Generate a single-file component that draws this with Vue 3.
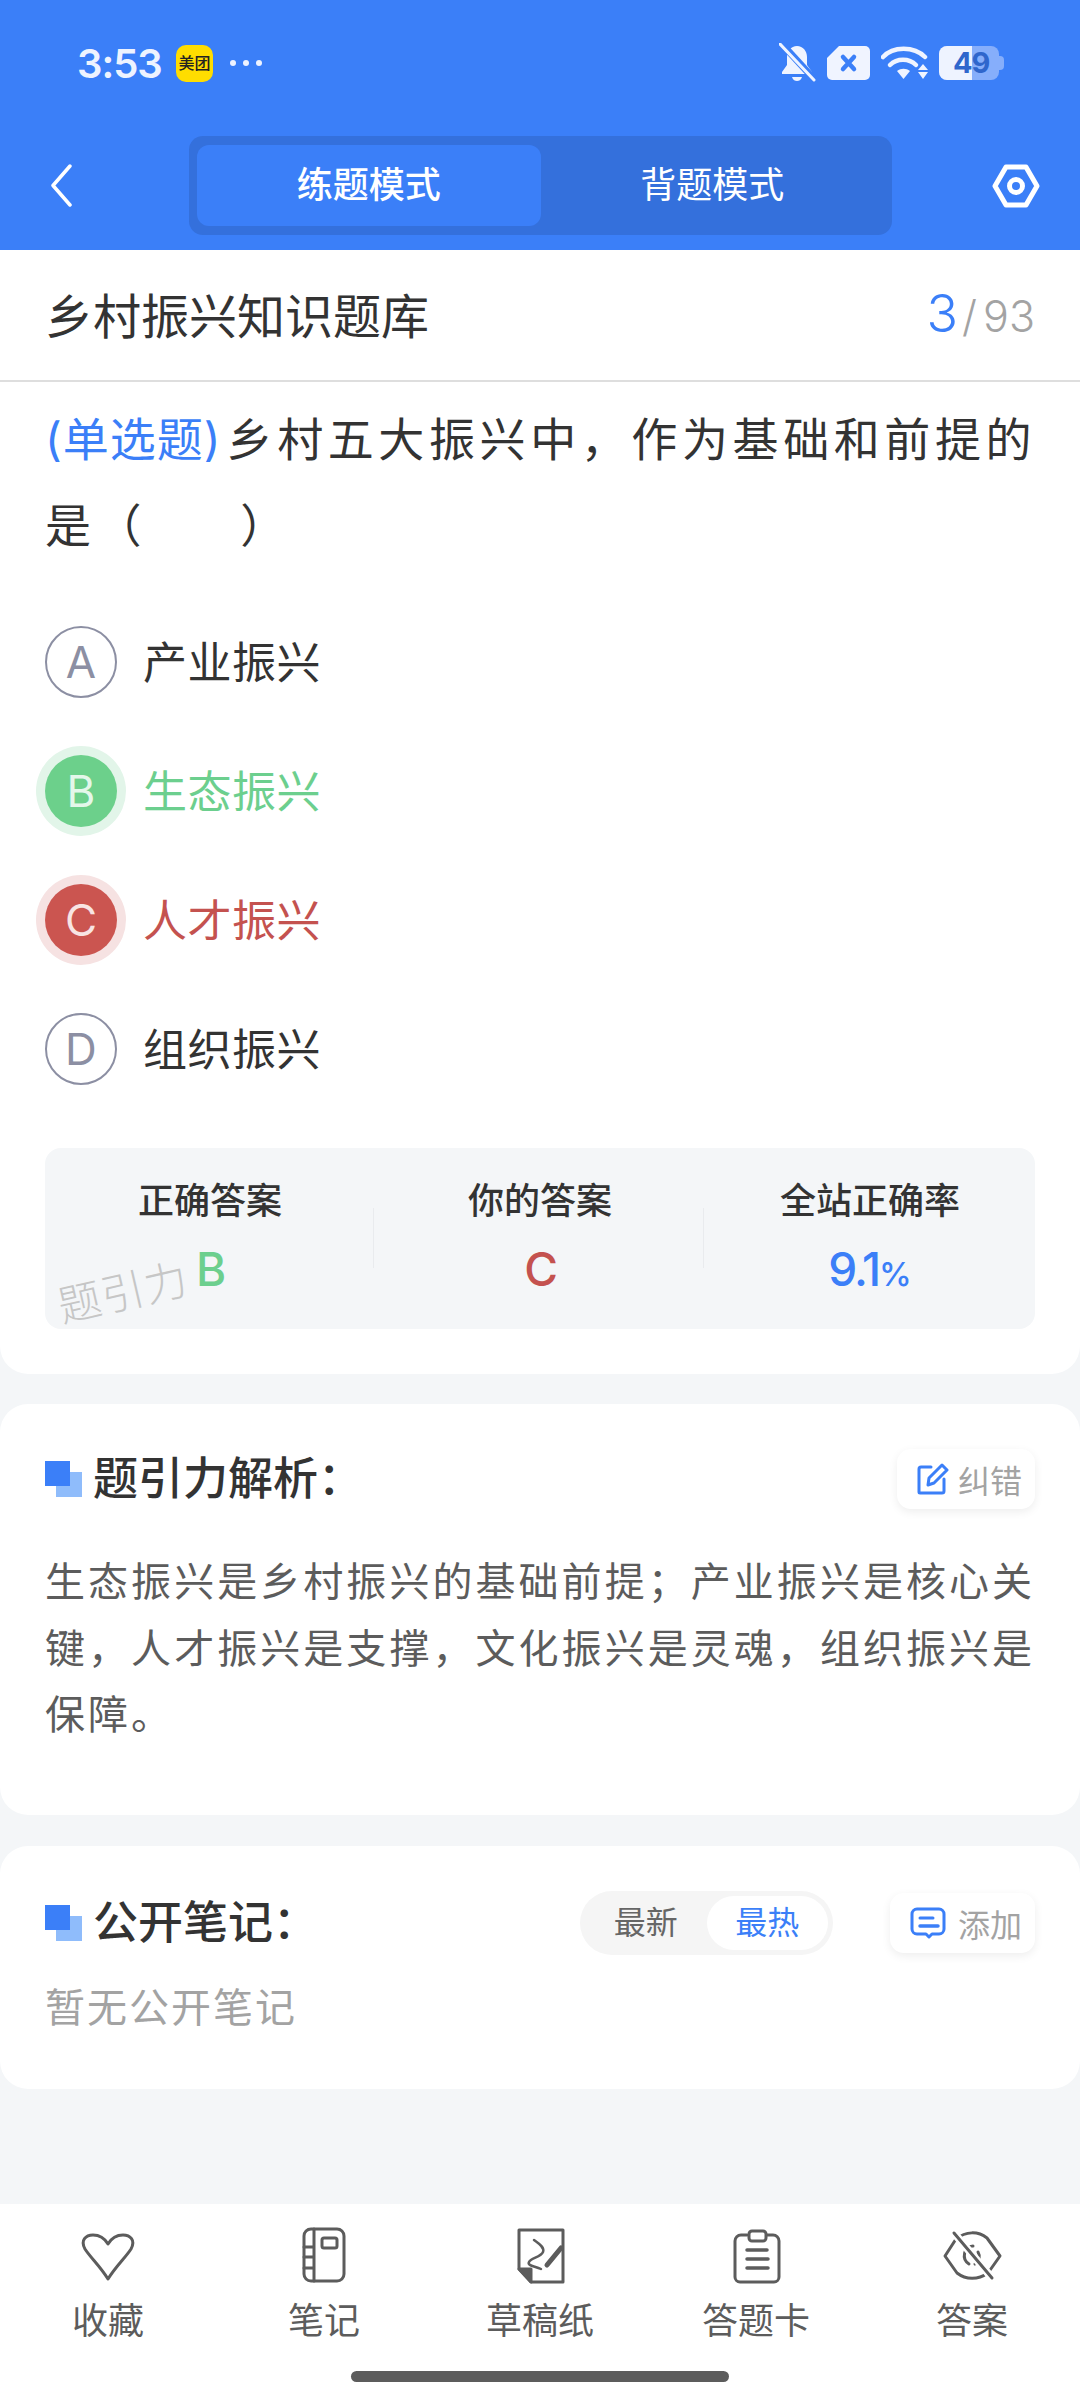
<template>
  <div class="page">
    <header class="top">
      <div class="status">
        <div class="status-left">
          <span class="time">3:53</span>
          <span class="mt">美团</span>
          <span class="dots"><i></i><i></i><i></i></span>
        </div>
        <div class="status-right">
          <svg class="bell" width="37" height="40" viewBox="0 0 37 40">
            <path d="M18 3c-6 0-10 5-10 11v8l-5 7v2h30v-2l-5-7v-8c0-6-4-11-10-11z" fill="#f0f4ff" />
            <path d="M13 34h10c-1 3-3 4-5 4s-4-1-5-4z" fill="#f0f4ff" />
            <path d="M2 0l33 36" stroke="#3b7ff8" stroke-width="7" />
            <path d="M1 1l34 36" stroke="#f0f4ff" stroke-width="3" stroke-linecap="round" />
          </svg>
          <svg class="sim" width="43" height="34" viewBox="0 0 43 34">
            <path d="M12 0h26a5 5 0 0 1 5 5v24a5 5 0 0 1-5 5H5a5 5 0 0 1-5-5V12z" fill="#f0f4ff" />
            <path d="M16 11l11 12M27 11L16 23" stroke="#3b7ff8" stroke-width="4.5" stroke-linecap="round" />
          </svg>
          <svg class="wifi" width="47" height="34" viewBox="0 0 47 34">
            <path d="M2 11C12 0 33 0 44 11" fill="none" stroke="#f0f4ff" stroke-width="4.5" stroke-linecap="round" />
            <path d="M9 19c7-7 19-7 26 0" fill="none" stroke="#f0f4ff" stroke-width="4.5" stroke-linecap="round" />
            <path d="M16 25c4-3 9-3 13 0l-6.500 8z" fill="#f0f4ff" />
            <path d="M42 18l5 6H37zM37 26h10l-5 7z" fill="#f0f4ff" />
          </svg>
          <div class="battery">
            <span class="battery-fill"></span>
            <span class="battery-tip"></span>
            <span class="battery-num">49</span>
          </div>
        </div>
      </div>

      <div class="toolbar">
        <svg class="back" width="22" height="43" viewBox="0 0 22 43">
          <path d="M20 2L3 21.500 20 41" fill="none" stroke="#fff" stroke-width="3.500" stroke-linecap="round" stroke-linejoin="round" />
        </svg>
        <div class="mode-tabs">
          <div class="mode-tab on">练题模式</div>
          <div class="mode-tab">背题模式</div>
        </div>
        <svg class="gear" width="48" height="44" viewBox="0 0 48 44">
          <path d="M14 3h20l11 19-11 19H14L3 22z" fill="none" stroke="#fff" stroke-width="5" stroke-linejoin="round" />
          <circle cx="24" cy="22" r="6.500" fill="none" stroke="#fff" stroke-width="5" />
        </svg>
      </div>
    </header>

    <section class="card question-card">
      <div class="title-row">
        <span class="title">乡村振兴知识题库</span>
        <span class="count"><b>3</b><em>/</em>93</span>
      </div>

      <div class="question">
        <span class="qtype">(单选题)</span>乡村五大振兴中&#65292;作为基础和前提的是&#65288;<span class="blank"></span>&#65289;
      </div>

      <div class="options">
        <div v-for="opt in options" :key="opt.key" class="option" :class="opt.state">
          <span class="letter">{{ opt.key }}</span>
          <span class="opt-text">{{ opt.text }}</span>
        </div>
      </div>

      <div class="stats">
        <div v-for="item in stats" :key="item.label" class="stat">
          <div class="stat-label">{{ item.label }}</div>
          <div class="stat-value" :class="item.cls">{{ item.value }}<small v-if="item.unit">{{ item.unit }}</small></div>
        </div>
        <span class="watermark">题引力</span>
      </div>
    </section>

    <section class="card analysis">
      <div class="head-row">
        <h2 class="heading"><span class="mark"></span>题引力解析&#65306;</h2>
        <div class="mini-btn fix">
          <svg width="33" height="32" viewBox="0 0 33 32">
            <path d="M15 4H5a2 2 0 0 0-2 2v23a1 1 0 0 0 1 1h22a2 2 0 0 0 2-2V16" fill="none" stroke="#3b7ff8" stroke-width="3" stroke-linecap="round" />
            <path d="M12 22l1-7L26 2l5 5-13 13z" fill="none" stroke="#3b7ff8" stroke-width="3" stroke-linejoin="round" />
          </svg>
          <span>纠错</span>
        </div>
      </div>
      <p class="analysis-text">生态振兴是乡村振兴的基础前提&#65307;产业振兴是核心关键&#65292;人才振兴是支撑&#65292;文化振兴是灵魂&#65292;组织振兴是保障&#12290;</p>
    </section>

    <section class="card notes">
      <div class="head-row">
        <h2 class="heading"><span class="mark"></span>公开笔记&#65306;</h2>
        <div class="note-tools">
          <div class="sort">
            <span class="sort-item">最新</span>
            <span class="sort-item on">最热</span>
          </div>
          <div class="mini-btn add">
            <svg width="36" height="32" viewBox="0 0 36 32">
              <path d="M7 2h22a5 5 0 0 1 5 5v15a5 5 0 0 1-5 5h-7l-3 3-3-3H7a5 5 0 0 1-5-5V7a5 5 0 0 1 5-5z" fill="none" stroke="#3b7ff8" stroke-width="3" stroke-linejoin="round" />
              <path d="M10 11h13" stroke="#3b7ff8" stroke-width="3" stroke-linecap="round" />
              <path d="M10 19h18" stroke="#3b7ff8" stroke-width="3.500" stroke-linecap="round" />
            </svg>
            <span>添加</span>
          </div>
        </div>
      </div>
      <p class="empty">暂无公开笔记</p>
    </section>

    <nav class="bottom">
      <div class="nav-item">
        <svg width="60" height="60" viewBox="0 0 60 60">
          <path d="M30 55C22 42 12 33 7 25 2 16 8 11 15 11c7 0 12 4 15 9 3-5 8-9 15-9 7 0 13 5 8 14-5 8-15 17-23 30z" />
        </svg>
        <span>收藏</span>
      </div>
      <div class="nav-item">
        <svg width="60" height="60" viewBox="0 0 60 60">
          <rect x="10" y="5" width="40" height="52" rx="7" />
          <path d="M20 5v52M10 23h10M10 33h10M10 44h10" />
          <rect x="28" y="14" width="15" height="10" rx="2" />
        </svg>
        <span>笔记</span>
      </div>
      <div class="nav-item">
        <svg width="60" height="60" viewBox="0 0 60 60">
          <path d="M9 6h44v52H21L9 45z" />
          <path d="M9 45h12v13z" class="solid" />
          <path d="M24 16c4 3 11 7 9 12s-12 6-14 10 6 4 12 7" stroke-width="2.500" />
          <path d="M51 24L37 41" stroke-width="5" />
        </svg>
        <span>草稿纸</span>
      </div>
      <div class="nav-item">
        <svg width="60" height="60" viewBox="0 0 60 60">
          <path d="M21 11h-6a6 6 0 0 0-6 6v36a5 5 0 0 0 5 5h34a5 5 0 0 0 5-5V17a6 6 0 0 0-6-6h-6" />
          <rect x="23" y="7" width="17" height="10" rx="3" />
          <path d="M21 26h20M21 35h21M21 44h21" stroke-width="3.500" />
        </svg>
        <span>答题卡</span>
      </div>
      <div class="nav-item">
        <svg width="60" height="60" viewBox="0 0 60 60">
          <path d="M3 32l11-17c10-8 22-8 31-1l13 18-12 17c-10 7-22 7-31 0z" />
          <path d="M31 22c-9 0-12 13-4 18M36 28c3 5 1 10-3 12" />
          <path d="M12 9l38 45" stroke="#fff" stroke-width="8" />
          <path d="M12 9l38 45" />
        </svg>
        <span>答案</span>
      </div>
      <div class="home-bar"></div>
    </nav>
  </div>
</template>

<script setup>
const options = [
  { key: 'A', text: '产业振兴', state: '' },
  { key: 'B', text: '生态振兴', state: 'right' },
  { key: 'C', text: '人才振兴', state: 'wrong' },
  { key: 'D', text: '组织振兴', state: '' }
]

const stats = [
  { label: '正确答案', value: 'B', cls: 'green' },
  { label: '你的答案', value: 'C', cls: 'red' },
  { label: '全站正确率', value: '9.1', unit: '%', cls: 'blue' }
]
</script>

<style>
body {
  margin: 0;
  background: #f4f6f8;
}
</style>

<style scoped>
.page {
  width: 1080px;
  height: 2400px;
  display: flex;
  flex-direction: column;
  overflow: hidden;
  background: #f4f6f8;
  font-family: 'Inter', 'Noto Sans CJK SC', sans-serif;
  color: #333;
}

.top {
  height: 250px;
  box-sizing: border-box;
  padding-top: 42px;
  background: #3b7ff8;
}

.status {
  height: 42px;
  display: flex;
  align-items: center;
  justify-content: space-between;
  padding: 0 76px 0 77px;
}

.status-left,
.status-right {
  display: flex;
  align-items: center;
}

.time {
  font-size: 40px;
  font-weight: 600;
  letter-spacing: -1px;
  color: #eef3ff;
  width: 99px;
}

.mt {
  width: 37px;
  height: 37px;
  border-radius: 10px;
  background: #ffdd00;
  color: #222;
  font-size: 16px;
  font-weight: 500;
  line-height: 37px;
  text-align: center;
  white-space: nowrap;
}

.dots {
  display: flex;
  gap: 7px;
  margin-left: 17px;
}

.dots i {
  width: 6px;
  height: 6px;
  border-radius: 50%;
  background: #eef3ff;
}

.status-right {
  gap: 11px;
}

.battery {
  position: relative;
  width: 60px;
  height: 34px;
  margin-right: 5px;
  border-radius: 8px;
  background: #86aefb;
  overflow: visible;
}

.battery-fill {
  position: absolute;
  left: 0;
  top: 0;
  bottom: 0;
  width: 33px;
  border-radius: 8px 0 0 8px;
  background: #eef3ff;
}

.battery-tip {
  position: absolute;
  right: -5px;
  top: 10px;
  width: 5px;
  height: 14px;
  border-radius: 0 4px 4px 0;
  background: #86aefb;
}

.battery-num {
  position: absolute;
  left: 14px;
  top: 0;
  line-height: 34px;
  font-size: 29px;
  font-weight: 700;
  color: #2f66cc;
  letter-spacing: -1px;
}

.toolbar {
  height: 99px;
  margin-top: 52px;
  display: flex;
  align-items: center;
  padding: 0 40px 0 50px;
}

.back {
  flex: none;
}

.mode-tabs {
  width: 703px;
  height: 99px;
  margin-left: 117px;
  box-sizing: border-box;
  padding: 9px 8px;
  display: flex;
  border-radius: 14px;
  background: #3470dc;
}

.mode-tab {
  flex: 1;
  border-radius: 12px;
  font-size: 36px;
  line-height: 81px;
  text-align: center;
  color: #fff;
}

.mode-tab.on {
  background: #3b7ff8;
  font-weight: 500;
}

.gear {
  margin-left: auto;
}

.card {
  background: #fff;
  border-radius: 28px;
}

.question-card {
  border-radius: 0 0 28px 28px;
  padding-bottom: 45px;
}

.title-row {
  height: 130px;
  display: flex;
  align-items: center;
  justify-content: space-between;
  padding: 0 45px;
  border-bottom: 2px solid #dedede;
}

.title {
  font-size: 48px;
  font-weight: 400;
  color: #333;
  padding-bottom: 5px;
}

.count {
  font-size: 43px;
  font-weight: 300;
  color: #a3a3a3;
  padding-bottom: 4px;
}

.count b {
  font-size: 52px;
  font-weight: 300;
  color: #3b7ff8;
}

.count em {
  font-style: normal;
  margin: 0 6px 0 4px;
}

.question {
  margin: 14px 37px 0 45px;
  font-size: 46px;
  line-height: 86px;
  letter-spacing: 4.600px;
  color: #333;
}

.qtype {
  color: #3b7ff8;
  letter-spacing: 1px;
  margin-right: 5px;
}

.blank {
  display: inline-block;
  width: 94px;
}

.options {
  margin: 29px 45px 0;
}

.option {
  height: 129px;
  display: flex;
  align-items: center;
}

.letter {
  width: 72px;
  height: 72px;
  flex: none;
  box-sizing: border-box;
  border: 2px solid #8c8fa3;
  border-radius: 50%;
  display: flex;
  align-items: center;
  justify-content: center;
  font-size: 44px;
  font-weight: 400;
  color: #8c8fa3;
}

.opt-text {
  margin-left: 26px;
  padding-bottom: 3px;
  font-size: 44px;
  letter-spacing: 0.500px;
  color: #333;
}

.option.right .letter {
  border: 0;
  background: #6cd08b;
  color: #e4f7ea;
  box-shadow: 0 0 0 9px #e2f5e9;
}

.option.right .opt-text {
  color: #6ccf8e;
}

.option.wrong .letter {
  border: 0;
  background: #cb5550;
  color: #f8e4e3;
  box-shadow: 0 0 0 9px #f6e2e2;
}

.option.wrong .opt-text {
  color: #c4524f;
}

.stats {
  position: relative;
  height: 181px;
  margin: 35px 45px 0;
  display: flex;
  border-radius: 16px;
  background: #f4f6f8;
}

.stat {
  flex: 1;
  position: relative;
  text-align: center;
}

.stat + .stat::before {
  content: '';
  position: absolute;
  left: -2px;
  top: 60px;
  height: 60px;
  width: 1px;
  background: #e9ebee;
}

.stat-label {
  margin-top: 28px;
  font-size: 36px;
  line-height: 50px;
  font-weight: 500;
  color: #333;
}

.stat-value {
  margin-top: 15px;
  font-size: 46px;
  line-height: 56px;
  font-weight: 500;
  letter-spacing: -2px;
}

.stat-value small {
  font-size: 33px;
  letter-spacing: 0;
}

.green {
  color: #6ccf8e;
}

.red {
  color: #c4524f;
}

.blue {
  color: #3b7ff8;
}

.watermark {
  position: absolute;
  left: 12px;
  top: 119px;
  font-size: 43px;
  font-weight: 300;
  letter-spacing: 1px;
  line-height: 50px;
  color: #c6c6c6;
  transform: rotate(-13deg);
}

.analysis {
  margin-top: 30px;
  padding: 45px 45px 66px;
}

.notes {
  margin-top: 31px;
  padding: 45px 45px 48px;
}

.head-row {
  display: flex;
  align-items: center;
  justify-content: space-between;
}

.heading {
  margin: 0;
  height: 60px;
  display: flex;
  align-items: center;
  font-size: 45px;
  line-height: 64px;
  font-weight: 500;
  color: #333;
}

.mark {
  position: relative;
  width: 37px;
  height: 36px;
  margin-right: 11px;
}

.mark::before {
  content: '';
  position: absolute;
  right: 0;
  bottom: 0;
  width: 26px;
  height: 25px;
  background: #8fbcfb;
}

.mark::after {
  content: '';
  position: absolute;
  left: 0;
  top: 0;
  width: 25px;
  height: 25px;
  background: #3b7ff8;
}

.mini-btn {
  display: flex;
  align-items: center;
  justify-content: flex-end;
  box-sizing: border-box;
  padding-right: 13px;
  gap: 9px;
  height: 60px;
  border-radius: 14px;
  background: #fff;
  box-shadow: 0 3px 10px rgba(0, 0, 0, 0.07);
  font-size: 32px;
  color: #a3a3a3;
}

.mini-btn.fix {
  width: 138px;
}

.mini-btn.add {
  width: 145px;
  margin-left: 57px;
  gap: 12px;
}

.analysis-text {
  margin: 40px -4px 0 0;
  font-size: 40px;
  line-height: 66.500px;
  letter-spacing: 3.050px;
  color: #5c5c5c;
}

.note-tools {
  display: flex;
  align-items: center;
}

.sort {
  width: 253px;
  height: 64px;
  box-sizing: border-box;
  padding: 5px;
  display: flex;
  border-radius: 32px;
  background: #f5f5f5;
}

.sort-item {
  flex: 1;
  border-radius: 27px;
  font-size: 32px;
  line-height: 54px;
  text-align: center;
  color: #666;
}

.sort-item.on {
  background: #fff;
  color: #3b7ff8;
}

.empty {
  margin: 20px 0 0;
  font-size: 40px;
  line-height: 66px;
  letter-spacing: 2px;
  color: #a3a3a3;
}

.bottom {
  position: relative;
  margin-top: auto;
  height: 196px;
  display: flex;
  align-items: flex-start;
  background: #fff;
}

.nav-item {
  width: 216px;
  padding-top: 20px;
  display: flex;
  flex-direction: column;
  align-items: center;
  font-size: 36px;
  line-height: 50px;
  color: #5c5c5c;
}

.nav-item span {
  margin-top: 12px;
}

.nav-item svg {
  fill: none;
  stroke: #5c5c5c;
  stroke-width: 3;
  stroke-linecap: round;
  stroke-linejoin: round;
}

.nav-item svg .solid {
  fill: #5c5c5c;
}

.home-bar {
  position: absolute;
  left: 351px;
  bottom: 18px;
  width: 378px;
  height: 11px;
  border-radius: 6px;
  background: #5c5c5c;
}
</style>
